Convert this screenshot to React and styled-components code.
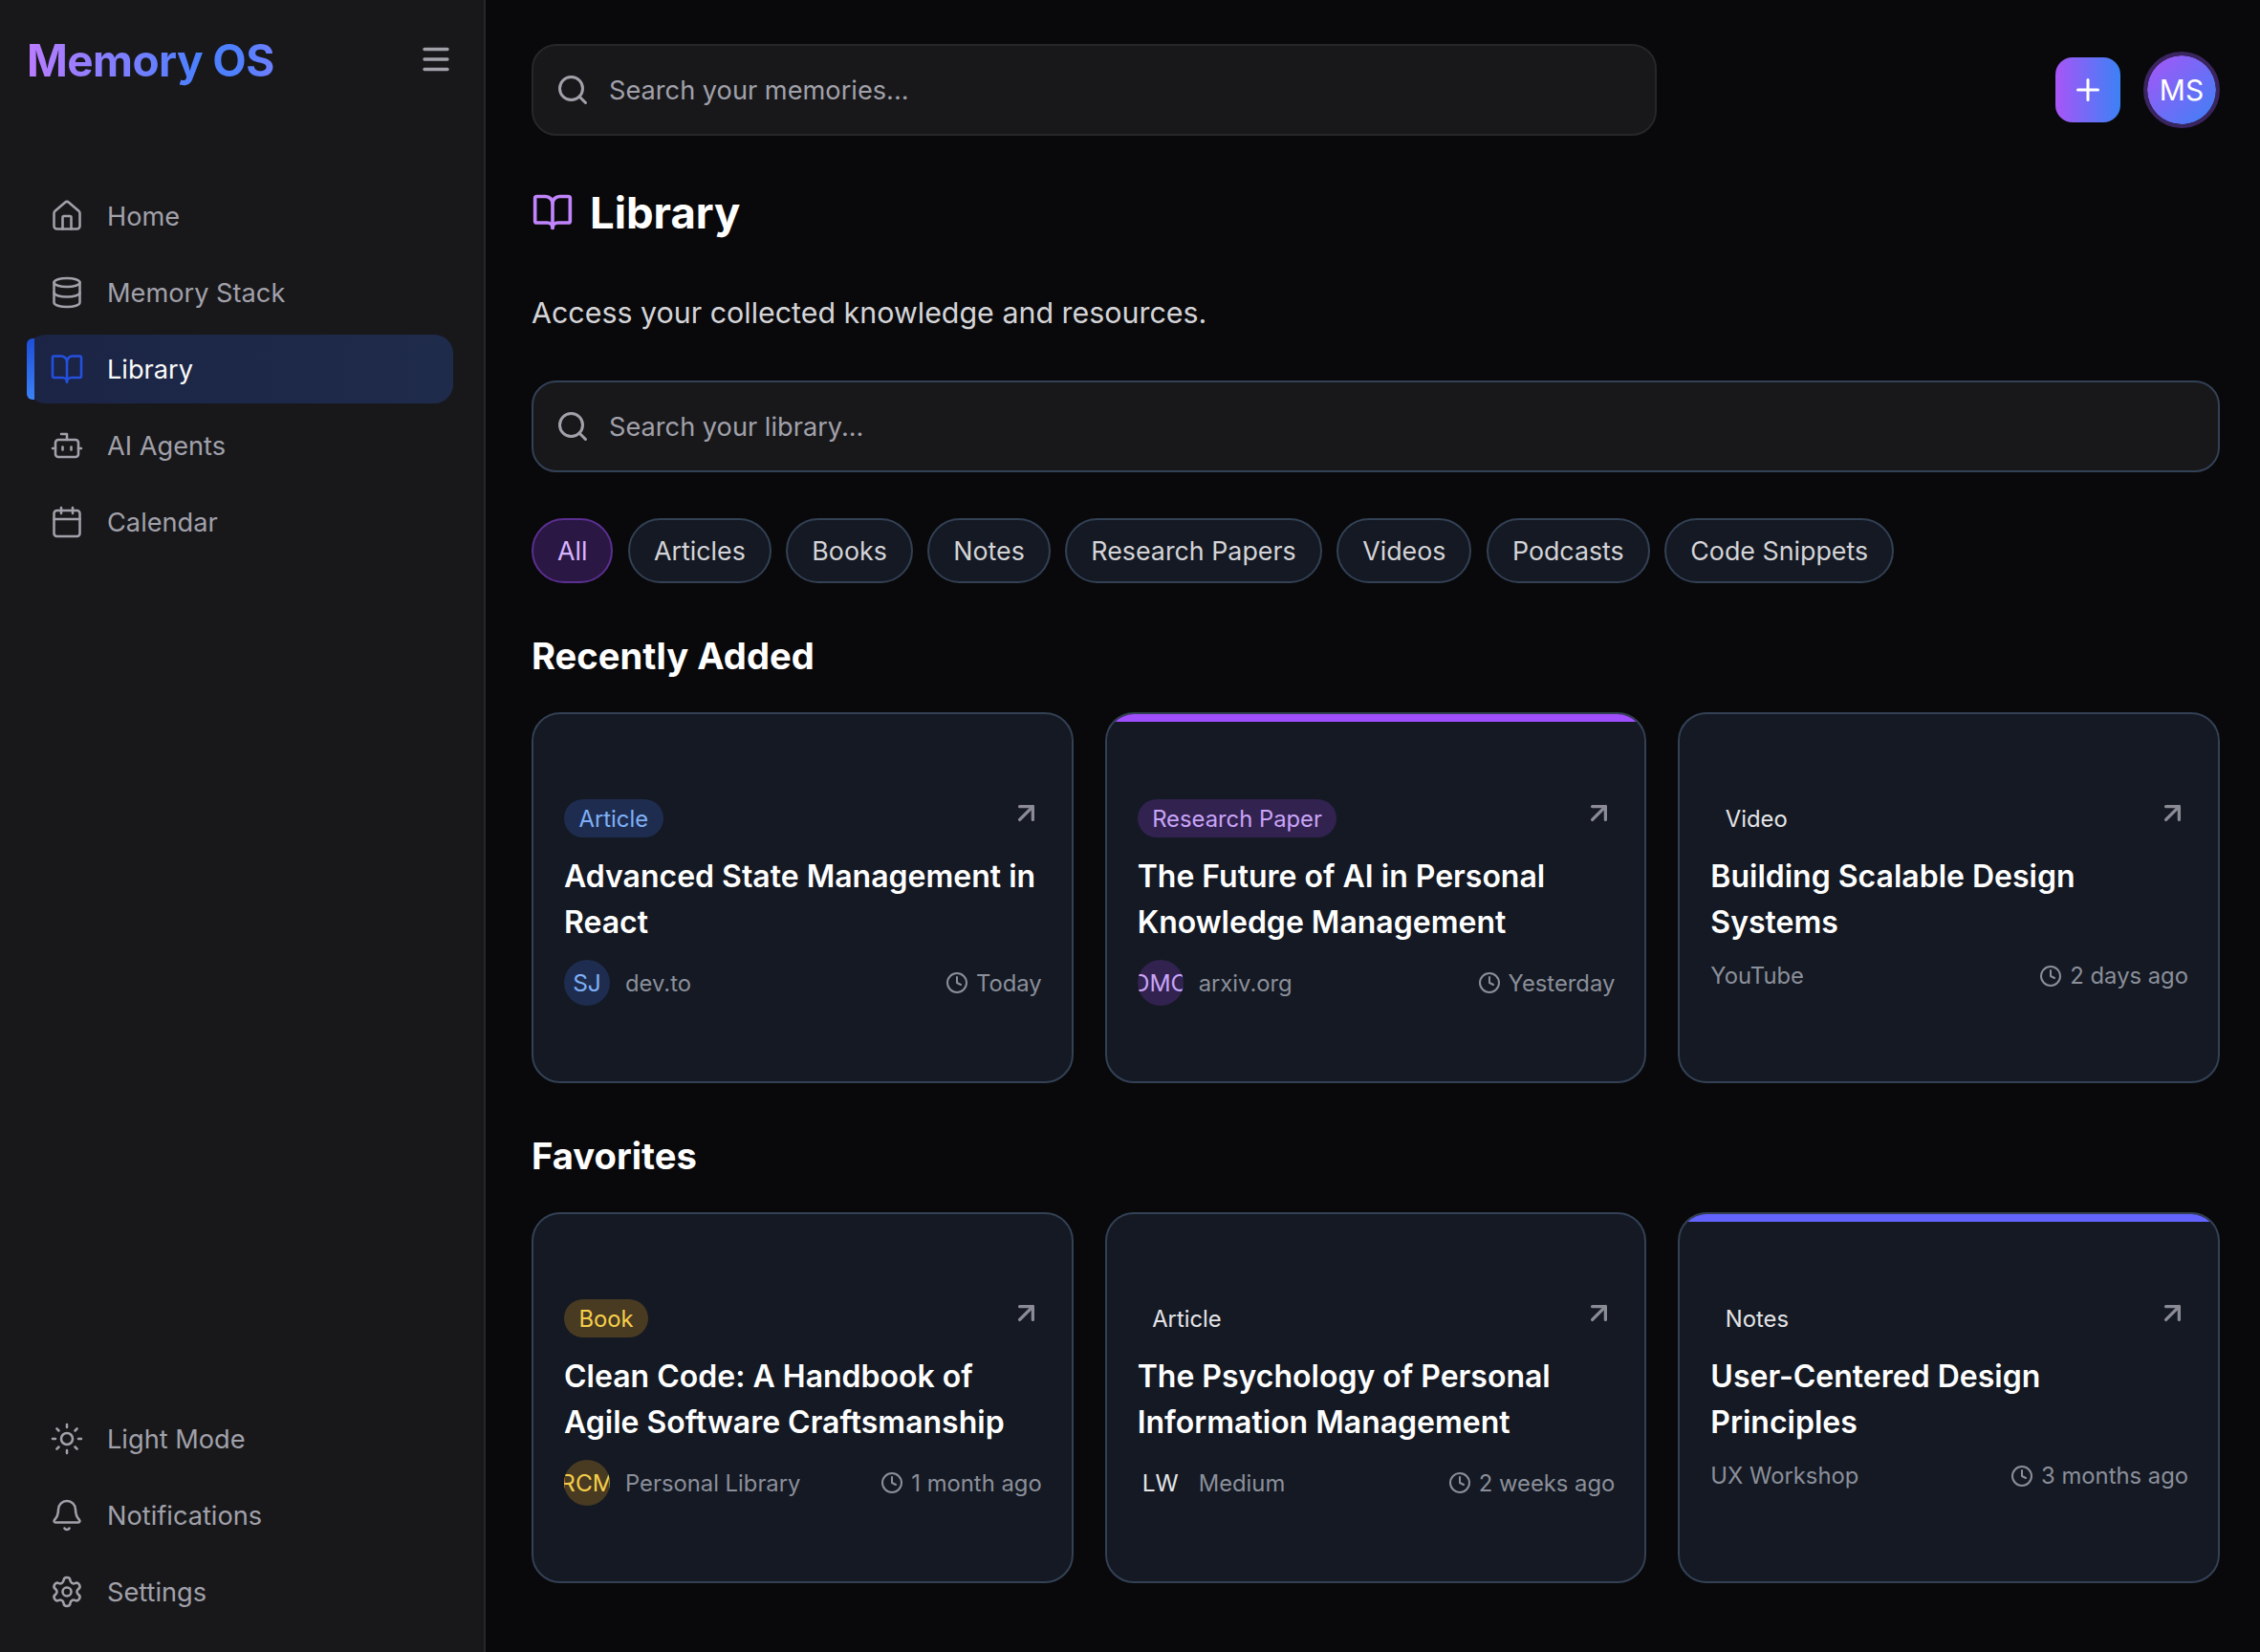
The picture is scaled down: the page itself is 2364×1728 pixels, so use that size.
import React from 'react';
import styled, { createGlobalStyle } from 'styled-components';
import {
  House, Database, BookOpen, Bot, Calendar, Sun, Bell, Settings, Menu, Search, Plus, Clock, ArrowUpRight,
} from 'lucide-react';

const GlobalStyle = createGlobalStyle`
  * { box-sizing: border-box; }
  html, body { margin: 0; padding: 0; height: 100%; background: #09090b; overflow: hidden; }
  body { font-family: Inter, "Liberation Sans", sans-serif; }
`;

const tones = {
  blue: { bg: '#1e2d4f', fg: '#7fb0f7' },
  purple: { bg: '#32224f', fg: '#c9a4f7' },
  amber: { bg: '#493a22', fg: '#f5cf4a' },
  plain: { bg: 'transparent', fg: '#e4e4e7' },
};

const Layout = styled.div`
  display: flex;
  height: 100vh;
  background: #09090b;
`;

const Sidebar = styled.aside`
  width: 508px;
  flex: none;
  display: flex;
  flex-direction: column;
  justify-content: space-between;
  padding: 0 32px 27px 28px;
  background: #18181b;
  border-right: 2px solid #27272a;
`;

const LogoRow = styled.div`
  display: flex;
  align-items: center;
  justify-content: space-between;
  height: 124px;
  margin-bottom: 66px;
  color: #a1a1aa;
`;

const Logo = styled.h1`
  margin: 2px 0 0;
  font-size: 46px;
  font-weight: 700;
  letter-spacing: -0.6px;
  background: linear-gradient(90deg, #bb7cff 0%, #4a80ff 70%, #4f80ff 85%, #6f7fff 100%);
  -webkit-background-clip: text;
  background-clip: text;
  color: transparent;
`;

const NavList = styled.nav`
  display: flex;
  flex-direction: column;
  gap: 8px;
`;

const NavItem = styled.a`
  position: relative;
  display: flex;
  align-items: center;
  gap: 24px;
  height: 72px;
  padding-left: 24px;
  border-radius: 20px;
  font-size: 27.2px;
  color: ${(p) => (p.$active ? '#fafafa' : '#a1a1aa')};
  background: ${(p) => (p.$active ? 'linear-gradient(90deg, #1b2444, #1f2b4b)' : 'transparent')};

  svg { color: ${(p) => (p.$active ? '#2450e0' : '#a1a1aa')}; flex: none; }

  ${(p) => p.$active && `
    &::before {
      content: '';
      position: absolute;
      left: 0;
      top: 4px;
      bottom: 4px;
      width: 8px;
      border-radius: 6px 0 0 6px;
      background: linear-gradient(180deg, #1d4ed8, #3b82f6);
    }
  `}
`;

const Main = styled.main`
  flex: 1;
  min-width: 0;
  padding: 46px 42px 0 48px;
`;

const TopBar = styled.div`
  display: flex;
  align-items: center;
  justify-content: space-between;
`;

const SearchBox = styled.div`
  display: flex;
  align-items: center;
  gap: 20px;
  height: 96px;
  width: ${(p) => p.$width || '100%'};
  padding-left: 23px;
  border-radius: 26px;
  background: #18181b;
  border: 2px solid ${(p) => p.$border};
  font-size: 27.2px;
  color: #a1a1aa;

  svg { color: #a1a1aa; flex: none; }
`;

const TopActions = styled.div`
  display: flex;
  align-items: center;
  gap: 24px;
`;

const AddButton = styled.button`
  display: flex;
  align-items: center;
  justify-content: center;
  width: 68px;
  height: 68px;
  padding: 0;
  border: none;
  border-radius: 18px;
  color: #fff;
  background: linear-gradient(90deg, #a855f7, #3b82f6);
`;

const UserAvatar = styled.div`
  display: flex;
  align-items: center;
  justify-content: center;
  width: 80px;
  height: 80px;
  border-radius: 50%;
  border: 4.5px solid #3b2560;
  font-size: 30px;
  color: #fff;
  background: linear-gradient(135deg, #a855f7, #3b82f6) padding-box;
`;

const PageTitle = styled.div`
  display: flex;
  align-items: center;
  gap: 17px;
  height: 60px;
  margin-top: 50px;

  svg { color: #c084fc; flex: none; }
`;

const TitleText = styled.h2`
  margin: 0;
  font-size: 45.4px;
  font-weight: 700;
  color: #fff;
`;

const Subtitle = styled.p`
  margin: 52px 0 48px;
  font-size: 30.4px;
  line-height: 46px;
  color: #d4d4d8;
`;

const Chips = styled.div`
  display: flex;
  gap: 15.5px;
  margin-top: 48px;
`;

const Chip = styled.span`
  display: flex;
  align-items: center;
  height: 68px;
  padding: 0 25px;
  border-radius: 34px;
  font-size: 26.8px;
  border: 2px solid ${(p) => (p.$active ? '#5b2f91' : '#334155')};
  background: ${(p) => (p.$active ? '#2a1743' : '#141923')};
  color: ${(p) => (p.$active ? '#d8b4fe' : '#d4d4d8')};
`;

const SectionTitle = styled.h3`
  margin: 48px 0 31px;
  font-size: 38.2px;
  line-height: 56px;
  font-weight: 700;
  color: #fff;
`;

const CardGrid = styled.div`
  display: grid;
  grid-template-columns: repeat(3, 1fr);
  gap: 33px;
`;

const Card = styled.article`
  position: relative;
  height: 388px;
  padding: 89px 31px 0 32px;
  overflow: hidden;
  border-radius: 30px;
  background: #141923;
  border: 2px solid #334155;

  ${(p) => p.$accent && `
    &::before {
      content: '';
      position: absolute;
      left: 0;
      right: 0;
      top: 0;
      height: 8px;
      background: ${p.$accent};
    }
  `}
`;

const CardHead = styled.div`
  display: flex;
  align-items: flex-start;
  justify-content: space-between;

  svg { color: #8b8b95; flex: none; margin-top: -2px; }
`;

const Badge = styled.span`
  display: flex;
  align-items: center;
  height: 40px;
  padding: 0 15.5px;
  border-radius: 20px;
  font-size: 23.8px;
  background: ${(p) => tones[p.$tone].bg};
  color: ${(p) => tones[p.$tone].fg};
`;

const CardTitle = styled.h4`
  margin: 17px 0 0;
  font-size: 32px;
  line-height: 48px;
  font-weight: 600;
  color: #fff;
`;

const CardMeta = styled.div`
  display: flex;
  align-items: center;
  justify-content: space-between;
  margin-top: ${(p) => (p.$compact ? '17px' : '15px')};
  font-size: 23.8px;
  color: #8b8f9a;
`;

const Source = styled.div`
  display: flex;
  align-items: center;
  gap: 16px;
`;

const SourceAvatar = styled.div`
  display: flex;
  align-items: center;
  justify-content: center;
  width: 48px;
  height: 48px;
  flex: none;
  overflow: hidden;
  white-space: nowrap;
  border-radius: 50%;
  font-size: 24.5px;
  background: ${(p) => tones[p.$tone].bg};
  color: ${(p) => tones[p.$tone].fg};
`;

const Time = styled.div`
  display: flex;
  align-items: center;
  gap: 8px;
`;

const mainNav = [
  { label: 'Home', icon: House },
  { label: 'Memory Stack', icon: Database },
  { label: 'Library', icon: BookOpen, active: true },
  { label: 'AI Agents', icon: Bot },
  { label: 'Calendar', icon: Calendar },
];

const bottomNav = [
  { label: 'Light Mode', icon: Sun },
  { label: 'Notifications', icon: Bell },
  { label: 'Settings', icon: Settings },
];

const filters = ['All', 'Articles', 'Books', 'Notes', 'Research Papers', 'Videos', 'Podcasts', 'Code Snippets'];

const recent = [
  { type: 'Article', tone: 'blue', title: 'Advanced State Management in React', initials: 'SJ', source: 'dev.to', time: 'Today' },
  { type: 'Research Paper', tone: 'purple', title: 'The Future of AI in Personal Knowledge Management', initials: 'DMC', source: 'arxiv.org', time: 'Yesterday', accent: '#a04fff' },
  { type: 'Video', tone: 'plain', title: 'Building Scalable Design Systems', source: 'YouTube', time: '2 days ago' },
];

const favorites = [
  { type: 'Book', tone: 'amber', title: 'Clean Code: A Handbook of Agile Software Craftsmanship', initials: 'RCM', source: 'Personal Library', time: '1 month ago' },
  { type: 'Article', tone: 'plain', title: 'The Psychology of Personal Information Management', initials: 'LW', source: 'Medium', time: '2 weeks ago' },
  { type: 'Notes', tone: 'plain', title: 'User-Centered Design Principles', source: 'UX Workshop', time: '3 months ago', accent: '#6363ff' },
];

const NavLinks = ({ items }) => (
  <NavList>
    {items.map(({ label, icon: Icon, active }) => (
      <NavItem key={label} $active={active}>
        <Icon size={36} strokeWidth={1.7} />
        {label}
      </NavItem>
    ))}
  </NavList>
);

const LibraryCard = ({ item }) => (
  <Card $accent={item.accent}>
    <CardHead>
      <Badge $tone={item.tone}>{item.type}</Badge>
      <ArrowUpRight size={33} strokeWidth={2.4} />
    </CardHead>
    <CardTitle>{item.title}</CardTitle>
    <CardMeta $compact={!item.initials}>
      <Source>
        {item.initials && <SourceAvatar $tone={item.tone}>{item.initials}</SourceAvatar>}
        {item.source}
      </Source>
      <Time>
        <Clock size={24} strokeWidth={2} />
        {item.time}
      </Time>
    </CardMeta>
  </Card>
);

const App = () => (
  <Layout>
    <GlobalStyle />
    <Sidebar>
      <div>
        <LogoRow>
          <Logo>Memory OS</Logo>
          <Menu size={36} strokeWidth={2.2} />
        </LogoRow>
        <NavLinks items={mainNav} />
      </div>
      <NavLinks items={bottomNav} />
    </Sidebar>
    <Main>
      <TopBar>
        <SearchBox $width="1177px" $border="#27272a">
          <Search size={36} strokeWidth={2} />
          Search your memories...
        </SearchBox>
        <TopActions>
          <AddButton><Plus size={36} strokeWidth={2} /></AddButton>
          <UserAvatar>MS</UserAvatar>
        </TopActions>
      </TopBar>
      <PageTitle>
        <BookOpen size={44} strokeWidth={2} />
        <TitleText>Library</TitleText>
      </PageTitle>
      <Subtitle>Access your collected knowledge and resources.</Subtitle>
      <SearchBox $border="#334155">
        <Search size={36} strokeWidth={2} />
        Search your library...
      </SearchBox>
      <Chips>
        {filters.map((name, i) => (
          <Chip key={name} $active={i === 0}>{name}</Chip>
        ))}
      </Chips>
      <SectionTitle>Recently Added</SectionTitle>
      <CardGrid>
        {recent.map((item) => <LibraryCard key={item.title} item={item} />)}
      </CardGrid>
      <SectionTitle>Favorites</SectionTitle>
      <CardGrid>
        {favorites.map((item) => <LibraryCard key={item.title} item={item} />)}
      </CardGrid>
    </Main>
  </Layout>
);

export default App;
